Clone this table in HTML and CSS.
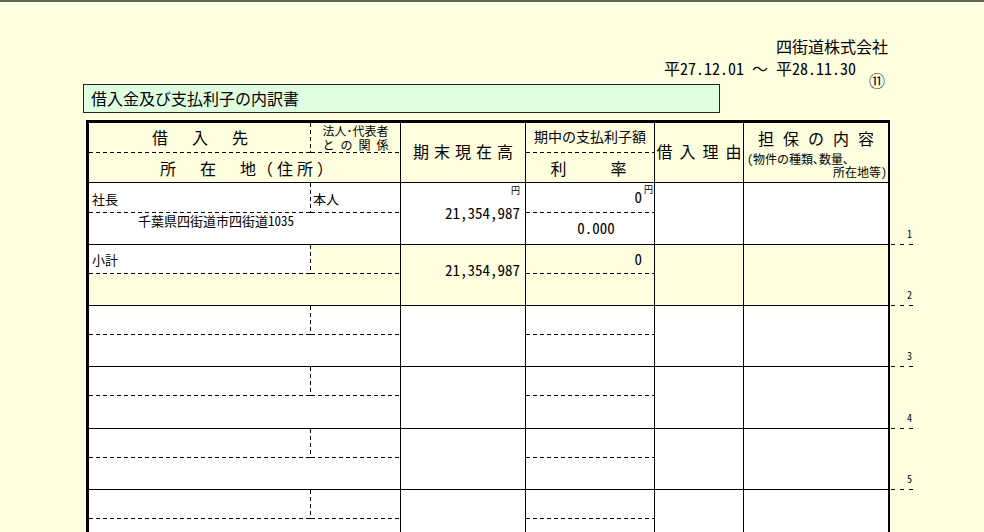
FILE: index.html
```html
<!DOCTYPE html>
<html lang="ja">
<head>
<meta charset="utf-8">
<title>借入金及び支払利子の内訳書</title>
<link rel="stylesheet" href="styles.css">
</head>
<body>
<div class="topbar"></div>
<div class="page">
  <div class="head">
    <div class="company">四街道株式会社</div>
    <div class="period"><span class="dates">平27.12.01 ～ 平28.11.30</span><span class="no">⑪</span></div>
  </div>
  <div class="title">借入金及び支払利子の内訳書</div>
  <div class="sheet">
    <div class="grid hdr">
      <div class="h-a dd"><span class="sp24">借入先</span></div>
      <div class="c h-b db"><span class="b1">法人･代表者</span><span class="b2"><span>と</span><span>の</span><span>関</span><span>係</span></span></div>
      <div class="c h-addr"><span class="ch">所</span><span class="ch">在</span><span class="ch last">地</span><span class="sp4">（住所）</span></div>
      <div class="c h-c"><span class="sp5">期末現在高</span></div>
      <div class="c h-d1 db">期中の支払利子額</div>
      <div class="c h-d2"><span class="sp44">利率</span></div>
      <div class="c h-e"><span class="sp7">借入理由</span></div>
      <div class="h-f">
        <span class="f1"><span class="sp9">担保の内容</span></span>
        <span class="f2">(物件の種類､数量､</span>
        <span class="f3">所在地等)</span>
      </div>
    </div>

    <div class="line">
      <div class="grid row row1 white">
        <div class="a dd">社長</div>
        <div class="c b db">本人</div>
        <div class="c addr">千葉県四街道市四街道1035</div>
        <div class="c cc"><span class="yen">円</span><span class="amt">21,354,987</span></div>
        <div class="c d1 db"><span class="int">0</span><span class="yen">円</span></div>
        <div class="c d2"><span class="rate">0.000</span></div>
        <div class="c e"></div>
        <div class="f"></div>
      </div>
      <div class="marker">1</div>
    </div>

    <div class="line">
      <div class="grid row sub">
        <div class="a dd wcell">小計</div>
        <div class="c b db"></div>
        <div class="c addr"></div>
        <div class="c cc"><span class="amt">21,354,987</span></div>
        <div class="c d1 db"><span class="int">0</span></div>
        <div class="c d2"></div>
        <div class="c e"></div>
        <div class="f"></div>
      </div>
      <div class="marker">2</div>
    </div>

    <div class="line">
      <div class="grid row white">
        <div class="a dd"></div>
        <div class="c b db"></div>
        <div class="c addr"></div>
        <div class="c cc"></div>
        <div class="c d1 db"></div>
        <div class="c d2"></div>
        <div class="c e"></div>
        <div class="f"></div>
      </div>
      <div class="marker">3</div>
    </div>

    <div class="line">
      <div class="grid row row4 white">
        <div class="a dd"></div>
        <div class="c b db"></div>
        <div class="c addr"></div>
        <div class="c cc"></div>
        <div class="c d1 db"></div>
        <div class="c d2"></div>
        <div class="c e"></div>
        <div class="f"></div>
      </div>
      <div class="marker">4</div>
    </div>

    <div class="line">
      <div class="grid row white">
        <div class="a dd"></div>
        <div class="c b db"></div>
        <div class="c addr"></div>
        <div class="c cc"></div>
        <div class="c d1 db"></div>
        <div class="c d2"></div>
        <div class="c e"></div>
        <div class="f"></div>
      </div>
      <div class="marker">5</div>
    </div>

    <div class="line">
      <div class="grid row white">
        <div class="a dd"></div>
        <div class="c b db"></div>
        <div class="c addr"></div>
        <div class="c cc"></div>
        <div class="c d1 db"></div>
        <div class="c d2"></div>
        <div class="c e"></div>
        <div class="f"></div>
      </div>
      <div class="marker"></div>
    </div>
  </div>
</div>
</body>
</html>
```

FILE: styles.css
```css
* { box-sizing: border-box; margin: 0; padding: 0; }
html, body { background: #ffffe0; }
body {
  width: 984px;
  height: 532px;
  overflow: hidden;
  font-family: "Noto Sans Mono CJK JP", "Noto Sans CJK JP", sans-serif;
  color: #000;
}
.topbar { height: 2px; background: #5e6456; }
.page { padding-left: 83px; }

.head {
  width: 807px;
  display: flex;
  flex-direction: column;
  align-items: flex-end;
  padding-top: 36px;
}
.company { font-size: 16px; line-height: 16px; padding-right: 2px; }
.period {
  display: flex;
  align-items: flex-start;
  margin-top: 6px;
  padding-right: 5px;
}
.dates { font-size: 16px; line-height: 16px; white-space: pre; }
.no { font-size: 16px; line-height: 16px; margin-left: 13px; margin-top: 12px; margin-bottom: -12px; }

.title {
  width: 637px;
  height: 29px;
  margin-top: 8px;
  border: 1px solid #222;
  background: #e0ffe0;
  font-size: 16px;
  line-height: 27px;
  padding-left: 7px;
}

.sheet { margin-top: 7px; margin-left: 3px; }

.grid {
  display: grid;
  grid-template-columns: 222px 90px 125px 129px 89px 144px;
  width: 804px;
  border-left: 3px solid #000;
  border-right: 2px solid #000;
  border-bottom: 1px solid #000;
}
.hdr {
  border-top: 3px solid #000;
  grid-template-rows: 30px 29px;
  height: 63px;
}
.row { height: 61px; grid-template-rows: 29px 1fr; }
.row1 { height: 62px; grid-template-rows: 30px 1fr; }
.row4 { height: 62px; }

.c { border-right: 1px solid #000; }

.db {
  background-image: repeating-linear-gradient(90deg, #000 0 4px, transparent 4px 7px);
  background-size: 100% 1px;
  background-position: 0 100%;
  background-repeat: no-repeat;
}
.dd {
  background-image:
    repeating-linear-gradient(90deg, #000 0 4px, transparent 4px 7px),
    repeating-linear-gradient(180deg, #000 0 4px, transparent 4px 7px);
  background-size: 100% 1px, 1px 100%;
  background-position: 0 100%, 100% 0;
  background-repeat: no-repeat;
}

/* header */
.hdr > div { display: flex; align-items: center; justify-content: center; white-space: nowrap; }
.h-a { grid-column: 1; grid-row: 1; font-size: 16px; line-height: 16px; padding-bottom: 3px; }
.h-b {
  grid-column: 2; grid-row: 1;
  flex-direction: column;
  font-size: 12px; line-height: 14px;
  padding-bottom: 1px;
}
.b1 { display: block; width: 66px; }
.b2 { display: flex; justify-content: space-between; width: 66px; }
.h-addr { grid-column: 1 / 3; grid-row: 2; font-size: 16px; line-height: 16px; padding-left: 4px; }
.ch { margin-right: 24px; }
.ch.last { margin-right: 1px; }
.h-c { grid-column: 3; grid-row: 1 / 3; font-size: 16px; line-height: 16px; padding-bottom: 3px; }
.h-d1 { grid-column: 4; grid-row: 1; font-size: 14px; line-height: 14px; padding-bottom: 4px; }
.h-d2 { grid-column: 4; grid-row: 2; font-size: 16px; line-height: 16px; padding-right: 3px; }
.h-e { grid-column: 5; grid-row: 1 / 3; font-size: 16px; line-height: 16px; padding-bottom: 4px; }
.hdr > .h-f {
  grid-column: 6; grid-row: 1 / 3;
  flex-direction: column;
  align-items: stretch;
  justify-content: flex-start;
  padding-top: 7px;
}
.f1 { font-size: 16px; line-height: 16px; text-align: center; }
.f2 { font-size: 12px; line-height: 13px; margin-top: 6px; padding-left: 3px; }
.f3 { font-size: 12px; line-height: 13px; text-align: right; padding-right: 1px; }

.sp24 { letter-spacing: 24px; margin-right: -24px; }
.sp4 { letter-spacing: 4px; margin-right: -4px; }
.sp5 { letter-spacing: 5px; margin-right: -5px; }
.sp44 { letter-spacing: 44px; margin-right: -44px; }
.sp7 { letter-spacing: 7px; margin-right: -7px; }
.sp9 { letter-spacing: 9px; margin-right: -9px; }

/* body rows */
.line { display: flex; }
.row > div { background-color: transparent; }
.white > div, .wcell { background-color: #fff; }
.sub > .wcell { background-color: #fff; }

.a { grid-column: 1; grid-row: 1; font-size: 13px; line-height: 13px; padding: 0 0 0 3px; display: flex; align-items: center; }
.b { grid-column: 2; grid-row: 1; font-size: 13px; line-height: 13px; padding-left: 2px; display: flex; align-items: center; }
.addr { grid-column: 1 / 3; grid-row: 2; font-size: 13px; line-height: 15px; padding-left: 49px; }
.cc {
  grid-column: 3; grid-row: 1 / 3;
  display: flex; flex-direction: column; align-items: flex-end;
  padding-right: 5px;
}
.d1 {
  grid-column: 4; grid-row: 1;
  display: flex; justify-content: flex-end; align-items: flex-start;
  padding: 2px 1px 0 0;
}
.d2 { grid-column: 4; grid-row: 2; display: flex; justify-content: center; padding: 7px 0 0 12px; }
.e { grid-column: 5; grid-row: 1 / 3; }
.f { grid-column: 6; grid-row: 1 / 3; }

.yen { font-size: 9px; line-height: 9px; }
.cc .yen { margin-top: 3px; }
.amt { font-size: 15px; line-height: 15px; margin-top: 10px; }
.sub .amt { margin-top: 17px; }
.int { font-size: 15px; line-height: 15px; margin-top: 4px; margin-right: 2px; }
.sub .d1 { padding: 6px 12px 0 0; }
.sub .int { margin-top: 0; margin-right: 0; }
.rate { font-size: 15px; line-height: 15px; }

.marker {
  width: 23px;
  display: flex;
  align-items: flex-end;
  justify-content: flex-end;
  font-size: 10px;
  line-height: 10px;
  padding: 0 1px 6px 0;
  background-image: repeating-linear-gradient(90deg, transparent 0 1px, #000 1px 5px, transparent 5px 9px);
  background-size: 100% 1px;
  background-position: 0 100%;
  background-repeat: no-repeat;
}
```
